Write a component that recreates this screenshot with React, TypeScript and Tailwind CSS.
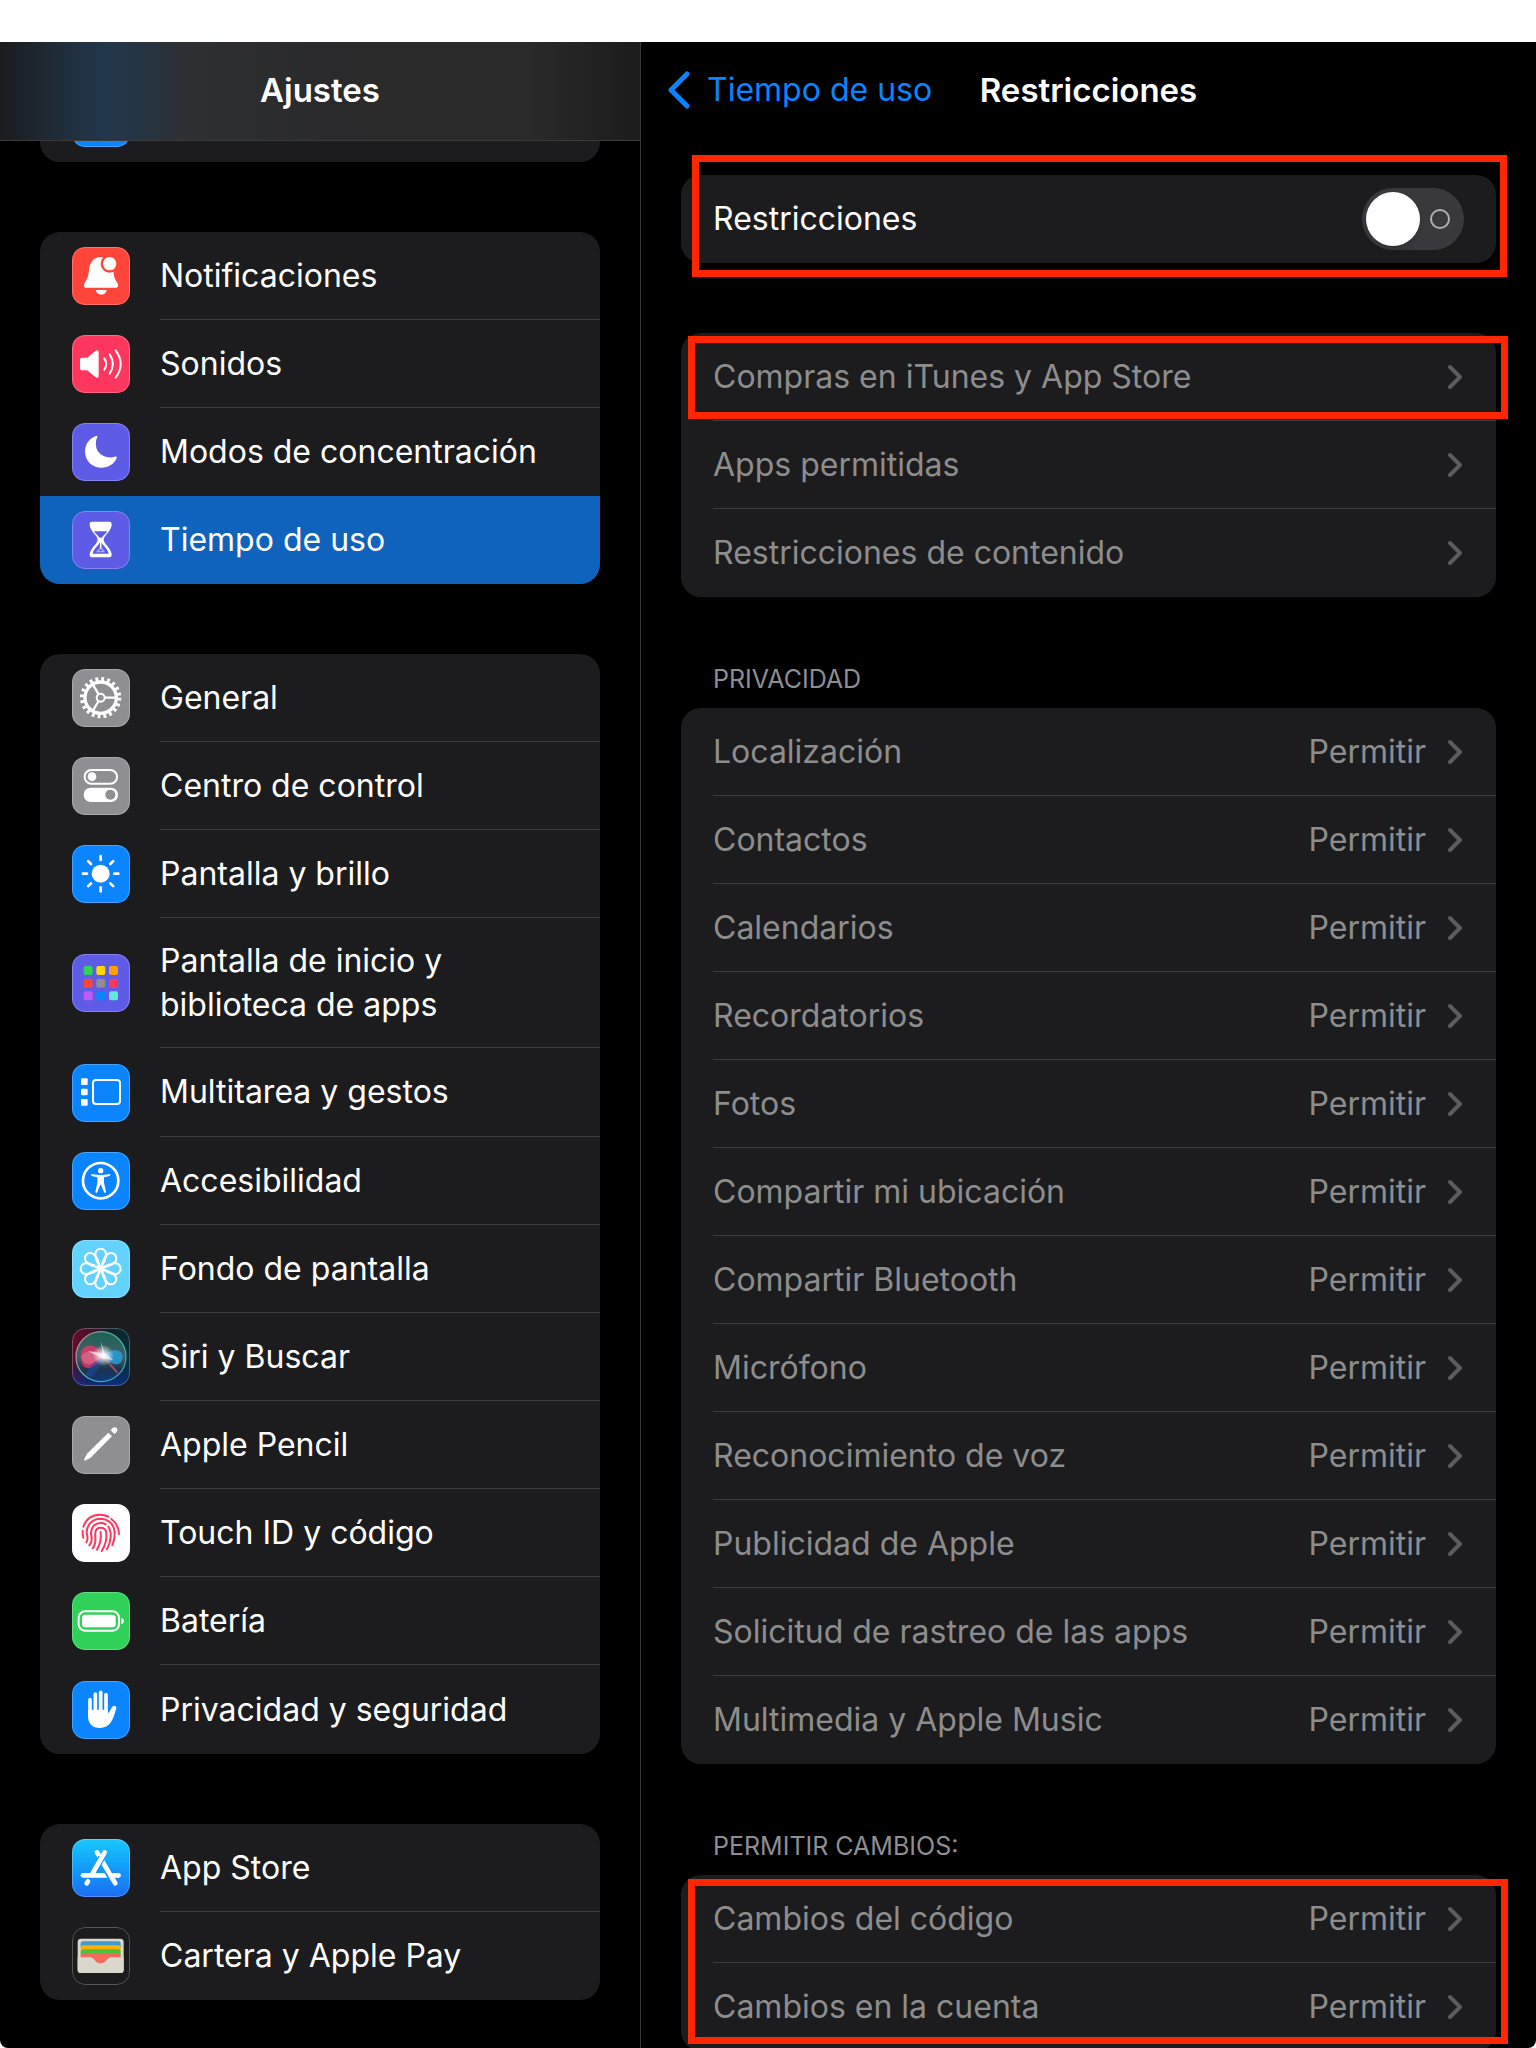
import { ReactNode, useState } from "react";
import clsx from "clsx";

interface MenuItem {
  label: string;
  tile: string;
  icon: ReactNode;
  row?: string;
  selected?: boolean;
}

interface Setting {
  label: string;
  value?: string;
}

// every glyph is drawn on a 174 x 174 grid, three units for a pixel of the tile
function Glyph({ children }: { children: ReactNode }) {
  return (
    <svg viewBox="0 0 174 174" className="size-full" fill="#fff" aria-hidden="true">
      {children}
    </svg>
  );
}

const BellIcon = () => (
  <Glyph>
    <path d="M86 30C66 30 53 46 51 68C49 92 44 97 38 107C33 117 36 122 44 122H130C138 122 141 117 136 107C129 97 125 90 124 68C122 46 106 30 86 30Z" />
    <path d="M71 129H104C103 138 96 143 88 143S73 138 71 129Z" />
    <circle cx="113" cy="50" r="27" fill="#ff453a" />
    <circle cx="113" cy="50" r="20" />
  </Glyph>
);

const SpeakerIcon = () => (
  <Glyph>
    <path d="M31 68H46L70 48C75 44 80 46 80 52V122C80 128 75 130 70 126L46 106H31C26 106 24 104 24 99V75C24 70 26 68 31 68Z" />
    <g fill="none" stroke="#fff" strokeWidth="6" strokeLinecap="round">
      <path d="M97 70Q108 87 97 104" />
      <path d="M113 58Q132 87 113 116" />
      <path d="M131 46Q161 87 131 128" />
    </g>
  </Glyph>
);

const MoonIcon = () => (
  <Glyph>
    <path d="M72 39C53 45 39 63 39 86C39 113 61 134 88 134C109 134 127 123 134 105C135 101 132 100 129 101C98 110 67 90 72 55C73 50 74 47 76 43C77 39 75 38 72 39Z" />
  </Glyph>
);

const HourglassIcon = () => (
  <Glyph>
    <path d="M60 32H112Q120 32 119 42C117 62 95 74 95 86C95 98 117 110 119 130Q120 139 112 139H60Q52 139 53 130C55 110 77 98 77 86C77 74 55 62 53 42Q52 32 60 32Z" />
    <path d="M66 61H106C101 70 93 74 88 82H84C79 74 71 70 66 61Z" fill="#5e5ce6" />
    <path d="M86 90C92 104 107 112 110 128H62C65 112 80 104 86 90Z" fill="#5e5ce6" />
    <path d="M86 80V110L96 122H76L86 110" stroke="#fff" strokeWidth="4" fill="none" opacity="0.5" />
    <path d="M84 80H88V112H84Z" />
  </Glyph>
);

const GearIcon = () => (
  <Glyph>
    <g fill="none" stroke="#fff">
      <circle cx="86" cy="86" r="47" strokeWidth="10" />
      <circle cx="86" cy="86" r="56" strokeWidth="12" strokeDasharray="8.6 9" />
      <circle cx="86" cy="86" r="12" strokeWidth="6" />
      <path d="M98 86H132M80 76L62 46M80 96L62 126" strokeWidth="7" />
    </g>
  </Glyph>
);

const SwitchesIcon = () => (
  <Glyph>
    <rect x="38" y="39" width="97" height="41" rx="20" fill="none" stroke="#fff" strokeWidth="6" />
    <circle cx="60" cy="59" r="13" />
    <rect x="35" y="92" width="103" height="43" rx="21" />
    <circle cx="115" cy="113" r="15" fill="#8e8e93" />
  </Glyph>
);

const SunIcon = () => (
  <Glyph>
    <circle cx="86" cy="86" r="27" />
    {[0, 45, 90, 135, 180, 225, 270, 315].map((angle) => (
      <path
        key={angle}
        d="M86 33V45"
        stroke="#fff"
        strokeWidth="8"
        strokeLinecap="round"
        transform={`rotate(${angle} 86 86)`}
      />
    ))}
  </Glyph>
);

const AppGridIcon = () => {
  const colors = [
    "#30d158", "#ffd60a", "#ff9f0a",
    "#ff453a", "#8e8e93", "#ff375f",
    "#bf5af2", "#0a84ff", "#66e5e0",
  ];
  return (
    <Glyph>
      {colors.map((color, i) => (
        <rect
          key={color}
          x={35 + (i % 3) * 38}
          y={36 + Math.floor(i / 3) * 38}
          width="27"
          height="27"
          rx="6"
          fill={color}
        />
      ))}
    </Glyph>
  );
};

const MultitaskIcon = () => (
  <Glyph>
    <rect x="27" y="43" width="20" height="20" rx="3" />
    <rect x="27" y="74" width="20" height="20" rx="3" />
    <rect x="27" y="105" width="20" height="20" rx="3" />
    <rect x="63" y="48" width="81" height="72" rx="9" fill="none" stroke="#fff" strokeWidth="6" />
  </Glyph>
);

const AccessibilityIcon = () => (
  <Glyph>
    <circle cx="86" cy="86" r="53" fill="none" stroke="#fff" strokeWidth="8" />
    <circle cx="86" cy="56" r="8" />
    <path d="M58 66Q86 72 114 66Q117 71 112 72Q102 75 96 76V92L102 120Q99 126 96 120L87 98H85L76 120Q73 126 70 120L76 92V76Q70 75 60 72Q55 70 58 66Z" />
  </Glyph>
);

const FlowerIcon = () => (
  <Glyph>
    <g fill="none" stroke="#fff" strokeWidth="6">
      {[0, 45, 90, 135, 180, 225, 270, 315].map((angle) => (
        <path
          key={angle}
          d="M86 82C74 66 70 52 70 42A16 16 0 0 1 102 42C102 52 98 66 86 82Z"
          transform={`rotate(${angle} 86 86)`}
        />
      ))}
      <circle cx="86" cy="86" r="9" />
    </g>
  </Glyph>
);

const SiriIcon = () => (
  <Glyph>
    <defs>
      <linearGradient id="siri-bg" x1="0" y1="0.2" x2="1" y2="0.5">
        <stop offset="0" stopColor="#6d0a2c" />
        <stop offset="0.5" stopColor="#15202c" />
        <stop offset="1" stopColor="#04303a" />
      </linearGradient>
      <linearGradient id="siri-low" x1="0" y1="0" x2="0" y2="1">
        <stop offset="0.6" stopColor="#0a2a90" stopOpacity="0" />
        <stop offset="1" stopColor="#1030a0" stopOpacity="0.7" />
      </linearGradient>
      <linearGradient id="siri-ring" x1="0" y1="0" x2="1" y2="1">
        <stop offset="0" stopColor="#e88aa0" />
        <stop offset="0.5" stopColor="#52d3b0" />
        <stop offset="1" stopColor="#3f9be0" />
      </linearGradient>
      <linearGradient id="siri-orb" x1="0" y1="0" x2="0" y2="1">
        <stop offset="0" stopColor="#17705a" />
        <stop offset="0.5" stopColor="#4d6a78" />
        <stop offset="0.75" stopColor="#22384e" />
        <stop offset="1" stopColor="#0d3a80" />
      </linearGradient>
      <radialGradient id="siri-glow">
        <stop offset="0" stopColor="#fff" />
        <stop offset="0.25" stopColor="#fff" stopOpacity="0.8" />
        <stop offset="1" stopColor="#fff" stopOpacity="0" />
      </radialGradient>
    </defs>
    <rect width="174" height="174" fill="url(#siri-bg)" />
    <rect width="174" height="174" fill="url(#siri-low)" />
    <circle cx="87" cy="86" r="75" fill="url(#siri-orb)" opacity="0.85" stroke="url(#siri-ring)" strokeWidth="4" />
    <path d="M94 86C76 40 28 44 26 82C26 132 62 132 94 86Z" fill="#e8356a" opacity="0.8" />
    <path d="M94 86C78 62 34 64 28 88C34 116 60 116 94 86Z" fill="#f0a0b4" opacity="0.35" />
    <path d="M94 86C112 60 154 60 152 90C148 118 116 112 94 86Z" fill="#27a5e8" opacity="0.75" />
    <path d="M94 86C60 100 38 130 44 142C70 158 84 110 94 86Z" fill="#1b4aa8" opacity="0.5" />
    <path d="M94 86L136 134" stroke="#d0607a" strokeWidth="5" opacity="0.7" />
    <circle cx="94" cy="82" r="32" fill="url(#siri-glow)" />
    <path d="M48 70L92 76L86 40L98 76L124 96L94 92Z" fill="#fff" opacity="0.6" />
  </Glyph>
);

const PencilIcon = () => (
  <Glyph>
    <path d="M109 50L120 61L55 126L38 134Q35 133 37 129L45 113Z" />
    <path d="M116 43L127 54L134 48Q139 42 134 36Q128 31 122 36Z" />
  </Glyph>
);

const FingerprintIcon = () => (
  <svg
    viewBox="0 0 174 174"
    className="size-full"
    fill="none"
    stroke="#ff375f"
    strokeWidth="6"
    strokeLinecap="round"
    aria-hidden="true"
  >
    <path d="M34 68C42 46 60 32 84 32Q98 32 109 38" />
    <path d="M118 45C132 55 140 70 141 90" />
    <path d="M32 80Q31 90 34 101" />
    <path d="M43 115C51 105 44 96 44 84C46 60 62 45 84 44C108 44 126 60 128 84Q129 106 121 124" />
    <path d="M52 124C65 112 57 98 57 86C58 68 70 57 86 57Q94 57 101 61" />
    <path d="M109 68C120 84 118 112 105 136" />
    <path d="M62 133C76 116 68 102 70 86C72 66 100 66 103 86C105 106 100 124 89 141" />
    <path d="M86 84C88 104 86 118 75 137" />
  </svg>
);

const BatteryIcon = () => (
  <Glyph>
    <rect x="20" y="58" width="121" height="58" rx="19" fill="none" stroke="#fff" strokeWidth="6" />
    <rect x="30" y="68" width="101" height="38" rx="9" />
    <path d="M148 77Q156 80 156 87T148 97Z" />
  </Glyph>
);

const HandIcon = () => (
  <Glyph>
    <g fill="none" stroke="#fff" strokeWidth="11" strokeLinecap="round">
      <path d="M54 56V104" />
      <path d="M70 39V96" />
      <path d="M86 34V96" />
      <path d="M102 41V96" />
    </g>
    <path d="M48 86H108V97C113 92 118 82 121 77C125 72 135 75 133 82C126 104 120 141 84 141C60 141 48 127 48 104Z" />
  </Glyph>
);

const AppStoreIcon = () => (
  <Glyph>
    <g stroke="#fff" strokeWidth="14" strokeLinecap="round">
      <path d="M33 109H139" />
      <path d="M104 88L126 126" stroke="#228cf7" strokeWidth="25" strokeLinecap="butt" />
      <path d="M125 109H139" />
      <path d="M75 40L130 133" />
      <path d="M98 40L58 108" stroke="#20a0fa" strokeWidth="22" strokeLinecap="butt" strokeDasharray="0 18 22 100" />
      <path d="M98 40L60 106" />
      <path d="M48 127L44 133" />
    </g>
  </Glyph>
);

const WalletIcon = () => (
  <Glyph>
    <rect x="17" y="35" width="138" height="103" rx="10" fill="#dad7cc" />
    <path d="M26 50Q26 43 33 43H139Q146 43 146 50V62H26Z" fill="#3d9bcb" />
    <path d="M26 62Q26 55 33 55H139Q146 55 146 62V74H26Z" fill="#ffb300" />
    <path d="M26 74Q26 67 33 67H139Q146 67 146 74V86H26Z" fill="#4fbf3c" />
    <path d="M26 86Q26 79 33 79H139Q146 79 146 86V94H26Z" fill="#f46a5e" />
    <path d="M17 91H55C66 91 66 110 86 110S106 91 117 91H155V128Q155 138 145 138H27Q17 138 17 128Z" fill="#dad7cc" />
    <path d="M56 90C68 91 68 109 86 109S104 91 116 90Z" fill="#f46a5e" />
  </Glyph>
);

const menu: MenuItem[][] = [
  [
    { label: "Notificaciones", tile: "bg-[#ff453a]", icon: <BellIcon /> },
    { label: "Sonidos", tile: "bg-[#ff375f]", icon: <SpeakerIcon /> },
    { label: "Modos de concentración", tile: "bg-[#5e5ce6]", icon: <MoonIcon /> },
    { label: "Tiempo de uso", tile: "bg-[#5e5ce6]", icon: <HourglassIcon />, selected: true },
  ],
  [
    { label: "General", tile: "bg-[#8e8e93]", icon: <GearIcon /> },
    { label: "Centro de control", tile: "bg-[#8e8e93]", icon: <SwitchesIcon /> },
    { label: "Pantalla y brillo", tile: "bg-[#0a84ff]", icon: <SunIcon /> },
    {
      label: "Pantalla de inicio y biblioteca de apps",
      tile: "bg-[#5e5ce6]",
      icon: <AppGridIcon />,
      row: "min-h-[130px]",
    },
    { label: "Multitarea y gestos", tile: "bg-[#0a84ff]", icon: <MultitaskIcon />, row: "min-h-[89px]" },
    { label: "Accesibilidad", tile: "bg-[#0a84ff]", icon: <AccessibilityIcon /> },
    { label: "Fondo de pantalla", tile: "bg-[#64d2ff]", icon: <FlowerIcon /> },
    { label: "Siri y Buscar", tile: "bg-[#15202c]", icon: <SiriIcon /> },
    { label: "Apple Pencil", tile: "bg-[#8e8e93]", icon: <PencilIcon /> },
    { label: "Touch ID y código", tile: "bg-white", icon: <FingerprintIcon /> },
    { label: "Batería", tile: "bg-[#30d158]", icon: <BatteryIcon /> },
    { label: "Privacidad y seguridad", tile: "bg-[#0a84ff]", icon: <HandIcon />, row: "min-h-[89px]" },
  ],
  [
    { label: "App Store", tile: "bg-linear-to-b from-[#1cc8fc] to-[#1d6cf2]", icon: <AppStoreIcon /> },
    { label: "Cartera y Apple Pay", tile: "bg-[#1c1c1e]", icon: <WalletIcon /> },
  ],
];

const content: Setting[] = [
  { label: "Compras en iTunes y App Store" },
  { label: "Apps permitidas" },
  { label: "Restricciones de contenido" },
];

const privacy: Setting[] = [
  "Localización",
  "Contactos",
  "Calendarios",
  "Recordatorios",
  "Fotos",
  "Compartir mi ubicación",
  "Compartir Bluetooth",
  "Micrófono",
  "Reconocimiento de voz",
  "Publicidad de Apple",
  "Solicitud de rastreo de las apps",
  "Multimedia y Apple Music",
].map((label) => ({ label, value: "Permitir" }));

const changes: Setting[] = [
  { label: "Cambios del código", value: "Permitir" },
  { label: "Cambios en la cuenta", value: "Permitir" },
];

function Tile({ className, children }: { className: string; children?: ReactNode }) {
  return (
    <span className={clsx("relative block size-[58px] shrink-0 overflow-hidden rounded-[13px]", className)}>
      {children}
      <span className="absolute inset-0 rounded-[13px] border border-white/25" />
    </span>
  );
}

function MenuRow({ item, last }: { item: MenuItem; last: boolean }) {
  return (
    <li>
      <a
        href="#"
        aria-current={item.selected ? "page" : undefined}
        className={clsx("flex pl-8", item.row ?? "min-h-[88px]", item.selected && "bg-[#0f63bc]")}
      >
        <span className="flex items-center">
          <Tile className={item.tile}>{item.icon}</Tile>
        </span>
        <span className={clsx("ml-[30px] flex grow items-center pr-6", !last && "border-b border-[#3d3d41]")}>
          {item.label}
        </span>
      </a>
    </li>
  );
}

function SettingList({ items }: { items: Setting[] }) {
  return (
    <ul className="overflow-hidden rounded-[20px] bg-[#1c1c1e] pl-8">
      {items.map(({ label, value }, i) => (
        <li key={label} className={clsx(i < items.length - 1 && "border-b border-[#3d3d41]")}>
          <button
            type="button"
            disabled
            className={clsx(
              "flex w-full items-center pr-8 text-left text-[#8d8d8e]",
              i < items.length - 1 ? "h-[87px]" : "h-[88px]",
            )}
          >
            <span className="grow">{label}</span>
            {value && <span>{value}</span>}
            <svg viewBox="0 0 16 28" className="ml-[22px] h-7 w-4 shrink-0" fill="none" aria-hidden="true">
              <path d="M2 4L12 14L2 24" stroke="#5b5b60" strokeWidth="4" strokeLinecap="round" strokeLinejoin="round" />
            </svg>
          </button>
        </li>
      ))}
    </ul>
  );
}

function SectionTitle({ children }: { children: ReactNode }) {
  return (
    <h2 className="px-8 pt-[66px] pb-[13px] text-[25px] leading-8 text-[#8d8d93] uppercase">{children}</h2>
  );
}

// red marker drawn over the card that it points out
function Marker({ className }: { className: string }) {
  return <div className={clsx("pointer-events-none absolute border-[7px] border-[#ff2600]", className)} />;
}

export default function App() {
  const [restricted, setRestricted] = useState(false);

  return (
    <div className="h-screen bg-white pt-[42px] font-['Inter','Liberation_Sans',sans-serif] text-[32px] leading-[44px] text-white">
      <div className="flex h-full overflow-hidden rounded-b-lg bg-black">
        {/* sidebar */}
        <aside className="flex w-5/12 flex-col">
          <header className="flex h-[99px] shrink-0 items-center justify-center border-b border-[#3b3b3d] bg-[linear-gradient(90deg,#1a1c1e_0%,#1e2c38_9%,#22374c_16%,#27333f_24%,#2e2f31_30%,#2a2a2c_50%,#2a2a2b_82%,#1c1c1c_100%)] pb-0.5">
            <h1 className="text-[33px] font-semibold">Ajustes</h1>
          </header>
          <nav className="flex min-h-0 grow flex-col gap-[70px] overflow-y-auto px-10 [scrollbar-width:none]">
            {/* end of the card that is scrolled under the header */}
            <div className="flex h-[21px] shrink-0 flex-col justify-end overflow-hidden rounded-b-[20px] bg-[#1c1c1e] pb-[15px] pl-8">
              <Tile className="bg-[#0a84ff]" />
            </div>
            {menu.map((group) => (
              <ul key={group[0].label} className="shrink-0 overflow-hidden rounded-[20px] bg-[#1c1c1e]">
                {group.map((item, i) => (
                  <MenuRow
                    key={item.label}
                    item={item}
                    last={i === group.length - 1 || Boolean(group[i + 1].selected)}
                  />
                ))}
              </ul>
            ))}
          </nav>
        </aside>

        {/* detail */}
        <main className="flex grow flex-col border-l border-[#38383a]">
          <header className="grid h-[98px] shrink-0 grid-cols-[1fr_auto_1fr] items-center pb-0.5">
            <a href="#" className="flex items-center gap-4 pl-6 text-[#0a84ff]">
              <svg viewBox="0 0 26 40" className="h-10 w-[26px]" fill="none" aria-hidden="true">
                <path d="M22 4L6 20L22 36" stroke="currentColor" strokeWidth="5" strokeLinecap="round" strokeLinejoin="round" />
              </svg>
              Tiempo de uso
            </a>
            <h1 className="text-[33px] font-semibold">Restricciones</h1>
          </header>

          <div className="min-h-0 grow overflow-y-auto px-10 pt-[35px] [scrollbar-width:none]">
            <section className="relative">
              <label className="flex h-[88px] items-center justify-between rounded-[20px] bg-[#1c1c1e] px-8">
                Restricciones
                <span className="relative flex h-[62px] w-[102px] items-center justify-between rounded-full bg-[#39393d] pr-[14px] pl-1 has-checked:flex-row-reverse has-checked:bg-[#30d158]">
                  <input
                    type="checkbox"
                    role="switch"
                    checked={restricted}
                    onChange={(e) => setRestricted(e.target.checked)}
                    className="absolute inset-0 size-full cursor-pointer appearance-none rounded-full"
                  />
                  <span className="size-[54px] rounded-full bg-white shadow-md" />
                  <span className="size-5 rounded-full border-2 border-[#b0b0b3]" />
                </span>
              </label>
              <Marker className="-top-5 -right-[11px] -bottom-[14px] left-[11px]" />
            </section>

            <section className="relative mt-[70px]">
              <SettingList items={content} />
              <Marker className="top-[3px] -right-3 left-[7px] h-[83px]" />
            </section>

            <section>
              <SectionTitle>Privacidad</SectionTitle>
              <SettingList items={privacy} />
            </section>

            <section>
              <SectionTitle>Permitir cambios:</SectionTitle>
              <div className="relative">
                <SettingList items={changes} />
                <Marker className="top-1 -right-3 left-[7px] h-[165px]" />
              </div>
            </section>
          </div>
        </main>
      </div>
    </div>
  );
}
